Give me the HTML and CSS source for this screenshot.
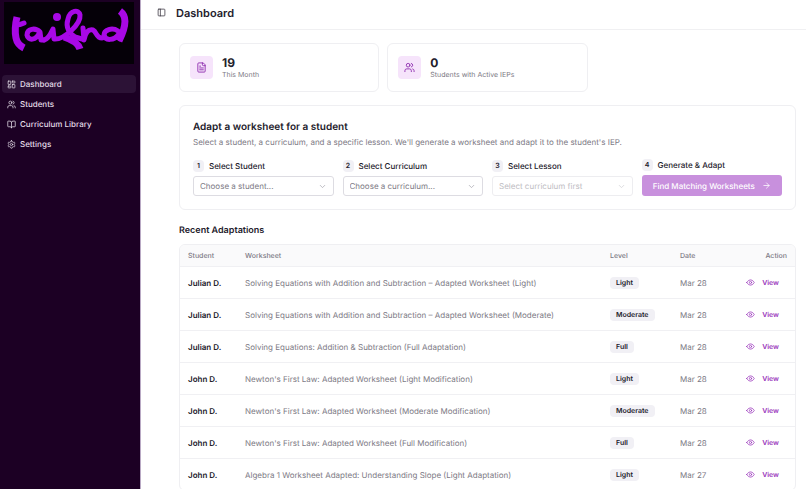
FILE: index.html
```html
<!DOCTYPE html>
<html lang="en">
<head>
    <meta charset="UTF-8">
    <meta name="viewport" content="width=device-width, initial-scale=1.0">
    <title>Dashboard</title>
    <link rel="stylesheet" href="styles.css">
</head>
<body>
    <!-- Shared icons -->
    <svg class="sprite" aria-hidden="true">
        <symbol id="icon-users" viewBox="0 0 24 24">
            <path d="M16 21v-2a4 4 0 0 0-4-4H6a4 4 0 0 0-4 4v2"/><circle cx="9" cy="7" r="4"/><path d="M22 21v-2a4 4 0 0 0-3-3.87"/><path d="M16 3.13a4 4 0 0 1 0 7.75"/>
        </symbol>
        <symbol id="icon-chevron" viewBox="0 0 24 24"><path d="m6 9 6 6 6-6"/></symbol>
        <symbol id="icon-eye" viewBox="0 0 24 24">
            <path d="M2 12s3.5-7 10-7 10 7 10 7-3.5 7-10 7-10-7-10-7Z"/><circle cx="12" cy="12" r="3"/>
        </symbol>
    </svg>

    <div class="layout">
        <aside class="sidebar">
            <a class="logo" href="#" aria-label="Home">
                <svg viewBox="0 0 130 62" aria-hidden="true">
                    <path class="logo-heavy" d="M13 15C11 23 11 31 12 36C13 41 16 44 20 46"/>
                    <path d="M12 23C15 23 18 22 20 21"/>
                    <path d="M36 30C31 25 23 27 23 33C24 39 32 39 36 30L37 38L40 38"/>
                    <path d="M40 38C45 37 47 31 49 27L50 37C60 38 77 22 76 13C75 7 66 8 64 17C61 26 66 32 71 35L78 37"/>
                    <circle class="logo-fill" cx="53" cy="15" r="4"/>
                    <path class="logo-heavy" d="M60 35C66 37 74 40 76 47"/>
                    <path d="M79 26L80 38C81 31 84 27 89 28C93 30 92 36 98 36"/>
                    <path d="M114 29C108 25 100 28 100 33C101 39 110 39 115 32L116 37"/>
                    <path class="logo-heavy" d="M116 9C123 14 122 25 115 39"/>
                </svg>
            </a>
            <nav class="nav">
                <a class="nav-link active" href="#">
                    <svg class="icon" viewBox="0 0 24 24"><rect x="3" y="3" width="7" height="9" rx="1"/><rect x="14" y="3" width="7" height="5" rx="1"/><rect x="14" y="12" width="7" height="9" rx="1"/><rect x="3" y="16" width="7" height="5" rx="1"/></svg>
                    Dashboard
                </a>
                <a class="nav-link" href="#">
                    <svg class="icon"><use href="#icon-users"/></svg>
                    Students
                </a>
                <a class="nav-link" href="#">
                    <svg class="icon" viewBox="0 0 24 24"><path d="M12 7v14"/><path d="M3 18a1 1 0 0 1-1-1V4a1 1 0 0 1 1-1h5a4 4 0 0 1 4 4 4 4 0 0 1 4-4h5a1 1 0 0 1 1 1v13a1 1 0 0 1-1 1h-6a3 3 0 0 0-3 3 3 3 0 0 0-3-3z"/></svg>
                    Curriculum Library
                </a>
                <a class="nav-link" href="#">
                    <svg class="icon" viewBox="0 0 24 24"><path d="M12.22 2h-.44a2 2 0 0 0-2 2v.18a2 2 0 0 1-1 1.73l-.43.25a2 2 0 0 1-2 0l-.15-.08a2 2 0 0 0-2.73.73l-.22.38a2 2 0 0 0 .73 2.73l.15.1a2 2 0 0 1 1 1.72v.51a2 2 0 0 1-1 1.74l-.15.09a2 2 0 0 0-.73 2.73l.22.38a2 2 0 0 0 2.73.73l.15-.08a2 2 0 0 1 2 0l.43.25a2 2 0 0 1 1 1.73V20a2 2 0 0 0 2 2h.44a2 2 0 0 0 2-2v-.18a2 2 0 0 1 1-1.73l.43-.25a2 2 0 0 1 2 0l.15.08a2 2 0 0 0 2.73-.73l.22-.39a2 2 0 0 0-.73-2.73l-.15-.08a2 2 0 0 1-1-1.74v-.5a2 2 0 0 1 1-1.74l.15-.09a2 2 0 0 0 .73-2.73l-.22-.38a2 2 0 0 0-2.73-.73l-.15.08a2 2 0 0 1-2 0l-.43-.25a2 2 0 0 1-1-1.73V4a2 2 0 0 0-2-2z"/><circle cx="12" cy="12" r="3"/></svg>
                    Settings
                </a>
            </nav>
        </aside>

        <div class="page">
            <header class="topbar">
                <button class="toggle" type="button" aria-label="Toggle sidebar">
                    <svg class="icon" viewBox="0 0 24 24"><rect x="3" y="3" width="18" height="18" rx="2"/><path d="M9 3v18"/></svg>
                </button>
                <h1>Dashboard</h1>
            </header>

            <main class="content">
                <section class="stats">
                    <div class="stat">
                        <span class="stat-icon">
                            <svg class="icon" viewBox="0 0 24 24"><path d="M15 2H6a2 2 0 0 0-2 2v16a2 2 0 0 0 2 2h12a2 2 0 0 0 2-2V7Z"/><path d="M14 2v4a2 2 0 0 0 2 2h4"/><path d="M10 9H8"/><path d="M16 13H8"/><path d="M16 17H8"/></svg>
                        </span>
                        <div>
                            <p class="stat-value">19</p>
                            <p class="stat-label">This Month</p>
                        </div>
                    </div>
                    <div class="stat">
                        <span class="stat-icon"><svg class="icon"><use href="#icon-users"/></svg></span>
                        <div>
                            <p class="stat-value">0</p>
                            <p class="stat-label">Students with Active IEPs</p>
                        </div>
                    </div>
                </section>

                <section class="panel">
                    <h2>Adapt a worksheet for a student</h2>
                    <p class="panel-text">Select a student, a curriculum, and a specific lesson. We'll generate a worksheet and adapt it to the student's IEP.</p>
                    <form class="steps">
                        <div class="step">
                            <label for="student"><span class="num">1</span>Select Student</label>
                            <div class="select">
                                <select id="student"><option>Choose a student...</option></select>
                                <svg class="icon"><use href="#icon-chevron"/></svg>
                            </div>
                        </div>
                        <div class="step">
                            <label for="curriculum"><span class="num">2</span>Select Curriculum</label>
                            <div class="select">
                                <select id="curriculum"><option>Choose a curriculum...</option></select>
                                <svg class="icon"><use href="#icon-chevron"/></svg>
                            </div>
                        </div>
                        <div class="step">
                            <label for="lesson"><span class="num">3</span>Select Lesson</label>
                            <div class="select disabled">
                                <select id="lesson" disabled><option>Select curriculum first</option></select>
                                <svg class="icon"><use href="#icon-chevron"/></svg>
                            </div>
                        </div>
                        <div class="step">
                            <label for="generate"><span class="num">4</span>Generate &amp; Adapt</label>
                            <button id="generate" class="generate" type="button" disabled>
                                Find Matching Worksheets
                                <svg class="icon" viewBox="0 0 24 24"><path d="M5 12h14"/><path d="m12 5 7 7-7 7"/></svg>
                            </button>
                        </div>
                    </form>
                </section>

                <section class="recent">
                    <h2>Recent Adaptations</h2>
                    <div class="table-wrap">
                        <table>
                            <thead>
                                <tr>
                                    <th class="col-student">Student</th>
                                    <th>Worksheet</th>
                                    <th class="col-level">Level</th>
                                    <th class="col-date">Date</th>
                                    <th class="col-action">Action</th>
                                </tr>
                            </thead>
                            <tbody>
                                <tr>
                                    <td class="name">Julian D.</td>
                                    <td>Solving Equations with Addition and Subtraction – Adapted Worksheet (Light)</td>
                                    <td><span class="badge">Light</span></td>
                                    <td>Mar 28</td>
                                    <td><a class="view" href="#"><svg class="icon"><use href="#icon-eye"/></svg>View</a></td>
                                </tr>
                                <tr>
                                    <td class="name">Julian D.</td>
                                    <td>Solving Equations with Addition and Subtraction – Adapted Worksheet (Moderate)</td>
                                    <td><span class="badge">Moderate</span></td>
                                    <td>Mar 28</td>
                                    <td><a class="view" href="#"><svg class="icon"><use href="#icon-eye"/></svg>View</a></td>
                                </tr>
                                <tr>
                                    <td class="name">Julian D.</td>
                                    <td>Solving Equations: Addition &amp; Subtraction (Full Adaptation)</td>
                                    <td><span class="badge">Full</span></td>
                                    <td>Mar 28</td>
                                    <td><a class="view" href="#"><svg class="icon"><use href="#icon-eye"/></svg>View</a></td>
                                </tr>
                                <tr>
                                    <td class="name">John D.</td>
                                    <td>Newton's First Law: Adapted Worksheet (Light Modification)</td>
                                    <td><span class="badge">Light</span></td>
                                    <td>Mar 28</td>
                                    <td><a class="view" href="#"><svg class="icon"><use href="#icon-eye"/></svg>View</a></td>
                                </tr>
                                <tr>
                                    <td class="name">John D.</td>
                                    <td>Newton's First Law: Adapted Worksheet (Moderate Modification)</td>
                                    <td><span class="badge">Moderate</span></td>
                                    <td>Mar 28</td>
                                    <td><a class="view" href="#"><svg class="icon"><use href="#icon-eye"/></svg>View</a></td>
                                </tr>
                                <tr>
                                    <td class="name">John D.</td>
                                    <td>Newton's First Law: Adapted Worksheet (Full Modification)</td>
                                    <td><span class="badge">Full</span></td>
                                    <td>Mar 28</td>
                                    <td><a class="view" href="#"><svg class="icon"><use href="#icon-eye"/></svg>View</a></td>
                                </tr>
                                <tr>
                                    <td class="name">John D.</td>
                                    <td>Algebra 1 Worksheet Adapted: Understanding Slope (Light Adaptation)</td>
                                    <td><span class="badge">Light</span></td>
                                    <td>Mar 27</td>
                                    <td><a class="view" href="#"><svg class="icon"><use href="#icon-eye"/></svg>View</a></td>
                                </tr>
                            </tbody>
                        </table>
                    </div>
                </section>
            </main>
        </div>
    </div>
</body>
</html>
```

FILE: styles.css
```css
* {
    box-sizing: border-box;
    margin: 0;
    padding: 0;
}
body {
    font-family: Inter, "Liberation Sans", sans-serif;
    font-size: 8px;
    line-height: 12px;
    color: #23202b;
    background: #fff;
    text-rendering: geometricPrecision;
}
a { text-decoration: none; }
button, select {
    font: inherit;
    text-rendering: inherit;
}
.sprite { display: none; }
.icon {
    width: 9px;
    height: 9px;
    flex: none;
    fill: none;
    stroke: currentColor;
    stroke-width: 2;
    stroke-linecap: round;
    stroke-linejoin: round;
}

.layout {
    display: flex;
    height: 100vh;
    overflow: hidden;
}

/* Sidebar */
.sidebar {
    width: 141px;
    flex: none;
    background: #1c0024;
    border-right: 1px solid #b9a9c4;
}
.logo {
    display: block;
    margin: 2px 6px 0 4px;
    background: #050008;
}
.logo svg {
    display: block;
    width: 100%;
    fill: none;
    stroke: #a808e6;
    stroke-width: 5;
    stroke-linecap: round;
    stroke-linejoin: round;
}
.logo .logo-heavy {
    stroke-width: 7;
    stroke-linecap: butt;
}
.logo .logo-fill { fill: #a808e6; stroke: none; }
.nav {
    display: flex;
    flex-direction: column;
    gap: 2px;
    padding: 11px 4px 0 2px;
}
.nav-link {
    display: flex;
    align-items: center;
    gap: 4px;
    height: 18px;
    padding: 0 5px;
    border-radius: 4px;
    color: #e4dde8;
    font-weight: 500;
}
.nav-link.active { background: #2c1236; }

/* Header */
.page {
    flex: 1;
    min-width: 0;
    overflow: hidden;
}
.topbar {
    display: flex;
    align-items: center;
    gap: 10px;
    height: 30px;
    padding: 0 16px 4px;
    border-bottom: 1px solid #f0f0f2;
}
.topbar h1 {
    font-size: 11px;
    font-weight: 600;
}
.toggle {
    display: flex;
    border: none;
    background: none;
    color: #35323d;
}

.content { padding: 13px 10px 13px 38px; }

/* Stats */
.stats {
    display: grid;
    grid-template-columns: repeat(3, 1fr);
    gap: 8px;
}
.stat {
    display: flex;
    align-items: center;
    gap: 9px;
    height: 49px;
    padding: 0 10px;
    border: 1px solid #efeff2;
    border-radius: 6px;
}
.stat-icon {
    display: flex;
    align-items: center;
    justify-content: center;
    width: 23px;
    height: 23px;
    border-radius: 4px;
    background: #f6e4fb;
    color: #8f2fb0;
}
.stat-icon .icon { width: 11px; height: 11px; }
.stat-value {
    font-size: 12px;
    font-weight: 700;
    line-height: 14px;
}
.stat-label {
    font-size: 7px;
    line-height: 10px;
    color: #7c7984;
}

/* Worksheet form */
.panel {
    margin-top: 13px;
    padding: 14px 13px 13px;
    border: 1px solid #efeff2;
    border-radius: 6px;
}
h2 {
    font-size: 10px;
    font-weight: 600;
    line-height: 14px;
}
.panel-text {
    margin: 2px 0 11px;
    color: #7c7984;
}
.steps {
    display: grid;
    grid-template-columns: repeat(4, 1fr);
    align-items: end;
    gap: 9px;
}
.step label {
    display: flex;
    align-items: center;
    gap: 5px;
    margin-bottom: 4px;
    font-weight: 500;
}
.num {
    width: 11px;
    border-radius: 4px;
    background: #f1f0f5;
    font-size: 7px;
    font-weight: 600;
    text-align: center;
}
.select {
    display: flex;
    align-items: center;
    position: relative;
}
.select select {
    width: 100%;
    height: 20px;
    padding: 0 6px;
    appearance: none;
    border: 1px solid #dddce2;
    border-radius: 3px;
    background: #fff;
    color: #7c7984;
}
.select .icon {
    position: absolute;
    right: 7px;
    color: #aaa8b0;
    pointer-events: none;
}
.select.disabled { opacity: 0.5; }
.select select:disabled { opacity: 1; }
.generate {
    display: flex;
    align-items: center;
    justify-content: center;
    gap: 7px;
    width: 100%;
    height: 21px;
    border: none;
    border-radius: 3px;
    background: #c890dd;
    color: #fff;
    font-weight: 500;
}

/* Recent adaptations */
.recent { margin-top: 14px; }
.recent h2 { font-size: 9px; }
.table-wrap {
    margin-top: 6px;
    border: 1px solid #efeff2;
    border-radius: 6px;
    overflow: hidden;
}
table {
    width: 100%;
    table-layout: fixed;
    border-collapse: separate;
    border-spacing: 0;
}
th {
    height: 21px;
    padding: 0 8px;
    background: #fafafb;
    color: #7c7984;
    font-size: 7px;
    font-weight: 500;
    text-align: left;
}
td {
    height: 32px;
    padding: 0 8px;
    border-top: 1px solid #f0f0f3;
    color: #7c7984;
    white-space: nowrap;
}
.col-student { width: 57px; }
.col-level { width: 70px; }
.col-date { width: 58px; }
.col-action {
    width: 65px;
    text-align: right;
}
.name {
    color: #23202b;
    font-weight: 600;
}
.badge {
    display: inline-block;
    padding: 0 6px;
    border-radius: 4px;
    background: #f1f0f5;
    color: #23202b;
    font-size: 7px;
    font-weight: 600;
}
.view {
    display: flex;
    align-items: center;
    justify-content: flex-end;
    gap: 7px;
    padding-right: 8px;
    color: #9a35bb;
    font-size: 7px;
    font-weight: 600;
}
```
